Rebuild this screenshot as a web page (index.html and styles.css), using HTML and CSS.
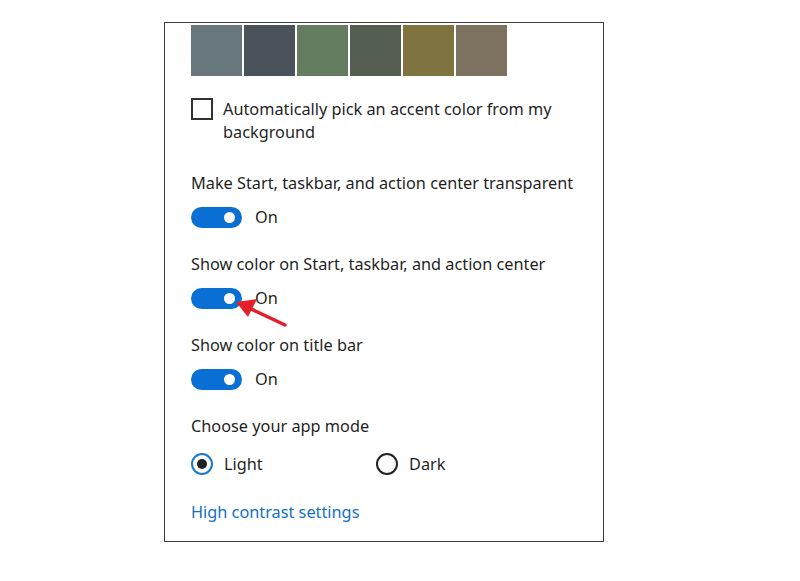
FILE: index.html
```html
<!DOCTYPE html>
<html>
<head>
<meta charset="utf-8">
<link rel="stylesheet" href="styles.css">
</head>
<body>
<div class="panel">
  <div class="swatches">
    <div class="sw c1"></div>
    <div class="sw c2"></div>
    <div class="sw c3"></div>
    <div class="sw c4"></div>
    <div class="sw c5"></div>
    <div class="sw c6"></div>
  </div>
  <div class="check-row">
    <span class="checkbox"></span>
    <span class="check-text">Automatically pick an accent color from my background</span>
  </div>
  <div class="setting first">
    <div class="label">Make Start, taskbar, and action center transparent</div>
    <div class="toggle-row"><span class="toggle"><span class="knob"></span></span><span class="state">On</span></div>
  </div>
  <div class="setting">
    <div class="label">Show color on Start, taskbar, and action center</div>
    <div class="toggle-row arrowed"><span class="toggle"><span class="knob"></span></span><span class="state">On</span>
      <svg class="arrow" width="60" height="36" viewBox="0 0 60 36">
        <line x1="50" y1="30" x2="14" y2="13" stroke="#e3202a" stroke-width="3.5" stroke-linecap="round"/>
        <polygon points="1,7 22,4 13,22" fill="#e3202a"/>
      </svg>
    </div>
  </div>
  <div class="setting">
    <div class="label">Show color on title bar</div>
    <div class="toggle-row"><span class="toggle"><span class="knob"></span></span><span class="state">On</span></div>
  </div>
  <div class="setting mode">
    <div class="label">Choose your app mode</div>
    <div class="radio-row">
      <div class="radio-item light"><span class="radio on"><span class="dot"></span></span><span>Light</span></div>
      <div class="radio-item"><span class="radio"></span><span>Dark</span></div>
    </div>
  </div>
  <a class="link" href="#">High contrast settings</a>
</div>
</body>
</html>
```

FILE: styles.css
```css
* { box-sizing: border-box; }
html, body { margin: 0; padding: 0; background: #fff; }
body {
  font-family: "Noto Sans", "Open Sans", sans-serif;
  font-size: 16.3px;
  color: #1f1f1f;
}
.panel {
  margin: 22px 0 0 164px;
  width: 440px;
  height: 520px;
  border: 1.5px solid #3a3a3a;
  padding: 2px 0 0 26px;
}
.swatches { display: flex; gap: 2.5px; }
.sw { width: 50.5px; height: 51px; }
.c1 { background: #68777c; }
.c2 { background: #4a525a; }
.c3 { background: #647d61; }
.c4 { background: #535e51; }
.c5 { background: #7f733f; }
.c6 { background: #7d7260; }

.check-row { display: flex; align-items: flex-start; margin-top: 22px; gap: 10px; }
.checkbox {
  flex: none;
  width: 22px; height: 22px;
  border: 2px solid #333;
  background: #fff;
}
.check-text { line-height: 22.5px; width: 360px; }

.setting { margin-top: 25px; }
.setting.first { margin-top: 29px; }
.label { line-height: 22px; height: 22px; white-space: nowrap; }
.toggle-row { display: flex; align-items: center; margin-top: 12px; height: 22px; position: relative; }
.toggle {
  width: 51px; height: 21px;
  border-radius: 11px;
  background: #0a6fd4;
  position: relative;
  flex: none;
}
.knob {
  position: absolute;
  right: 7px; top: 5px;
  width: 11px; height: 11px;
  border-radius: 50%;
  background: #fff;
}
.state { margin-left: 13px; }
.arrow { position: absolute; left: 44px; top: 8px; }

.mode .radio-row { display: flex; margin-top: 16px; height: 22px; align-items: center; }
.radio-item { display: flex; align-items: center; gap: 11px; }
.radio-item.light { width: 185px; }
.radio {
  width: 22px; height: 22px;
  border-radius: 50%;
  border: 2px solid #222;
  display: flex; align-items: center; justify-content: center;
  flex: none;
}
.radio.on { border-color: #1a78d2; }
.dot { width: 10px; height: 10px; border-radius: 50%; background: #222; }

.link {
  display: block;
  margin-top: 26px;
  line-height: 22px;
  color: #1171c8;
  text-decoration: none;
  width: max-content;
}
```
